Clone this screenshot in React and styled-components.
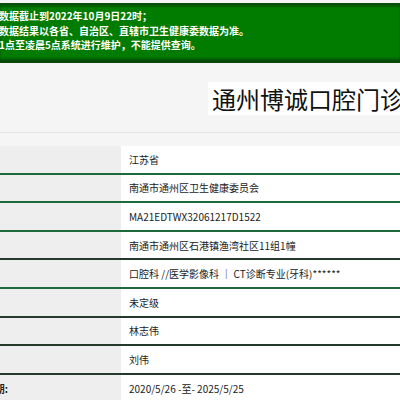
import React from "react";
import styled, { createGlobalStyle } from "styled-components";

const Global = createGlobalStyle`
  html, body { margin: 0; padding: 0; }
  body {
    background: #f5f5f5;
    width: 400px;
    height: 400px;
    overflow: hidden;
    font-family: "Noto Sans CJK SC", "Noto Sans", sans-serif;
  }
`;

const Page = styled.div`
  width: 400px;
  padding-top: 3px;
`;

const Banner = styled.div`
  height: 51px;
  background: #017c01;
  border-top: 2px solid #0b4d0b;
  border-bottom: 3px solid #0a480a;
  box-shadow: inset 0 2px 2px rgba(0, 0, 0, 0.25), inset 0 -2px 2px rgba(0, 0, 0, 0.25);
  padding-top: 4px;
  box-sizing: content-box;
`;

const Notice = styled.div`
  color: #ffffff;
  font-size: 10px;
  font-weight: 700;
  line-height: 14.5px;
  white-space: nowrap;
  margin-left: -1px;
`;

const TitleBar = styled.div`
  height: 68px;
  border-bottom: 1px solid #e4e4e4;
  display: flex;
  align-items: center;
  padding-left: 208px;
  overflow: hidden;
  margin-top: 1px;
`;

const Title = styled.h1`
  margin: 0;
  background: #ffffff;
  padding: 0 4px;
  font-size: 24px;
  font-weight: 400;
  line-height: 33px;
  color: #111;
  white-space: nowrap;
  letter-spacing: 0px;
`;

const Table = styled.div`
  margin-top: 13px;
  display: flex;
  flex-direction: column;
`;

const Row = styled.div`
  display: grid;
  grid-template-columns: 121px 1fr;
  height: 28.6px;
  box-sizing: border-box;
  border-bottom: 2px solid ${(p) => (p.$dark ? "#25382c" : "#1f6a3c")};
`;

const Label = styled.div`
  background: #eeeeee;
  font-size: 10px;
  font-weight: 700;
  color: #222;
  display: flex;
  align-items: center;
  white-space: nowrap;
  overflow: hidden;
  justify-content: flex-end;
  padding-right: 113px;
`;

const Value = styled.div`
  background: #ffffff;
  font-size: 10px;
  color: #222;
  display: flex;
  align-items: center;
  padding-left: 8px;
  white-space: nowrap;
  overflow: hidden;
`;

const rows = [
  { label: "", value: "江苏省" },
  { label: "", value: "南通市通州区卫生健康委员会" },
  { label: "", value: "MA21EDTWX32061217D1522" },
  { label: "", value: "南通市通州区石港镇渔湾社区11组1幢", dark: true },
  { label: "", value: "口腔科 //医学影像科 ｜ CT诊断专业(牙科)******" },
  { label: "", value: "未定级", dark: true },
  { label: "", value: "林志伟", dark: true },
  { label: "", value: "刘伟", dark: true },
  { label: "有效期:", value: "2020/5/26 -至- 2025/5/25" },
];

export default function App() {
  return (
    <Page>
      <Global />
      <Banner>
        <Notice>数据截止到2022年10月9日22时；</Notice>
        <Notice>数据结果以各省、自治区、直辖市卫生健康委数据为准。</Notice>
        <Notice>1点至凌晨5点系统进行维护，不能提供查询。</Notice>
      </Banner>
      <TitleBar>
        <Title>通州博诚口腔门诊部</Title>
      </TitleBar>
      <Table>
        {rows.map((r, i) => (
          <Row key={i} $dark={r.dark}>
            <Label>{r.label}</Label>
            <Value>{r.value}</Value>
          </Row>
        ))}
      </Table>
    </Page>
  );
}
